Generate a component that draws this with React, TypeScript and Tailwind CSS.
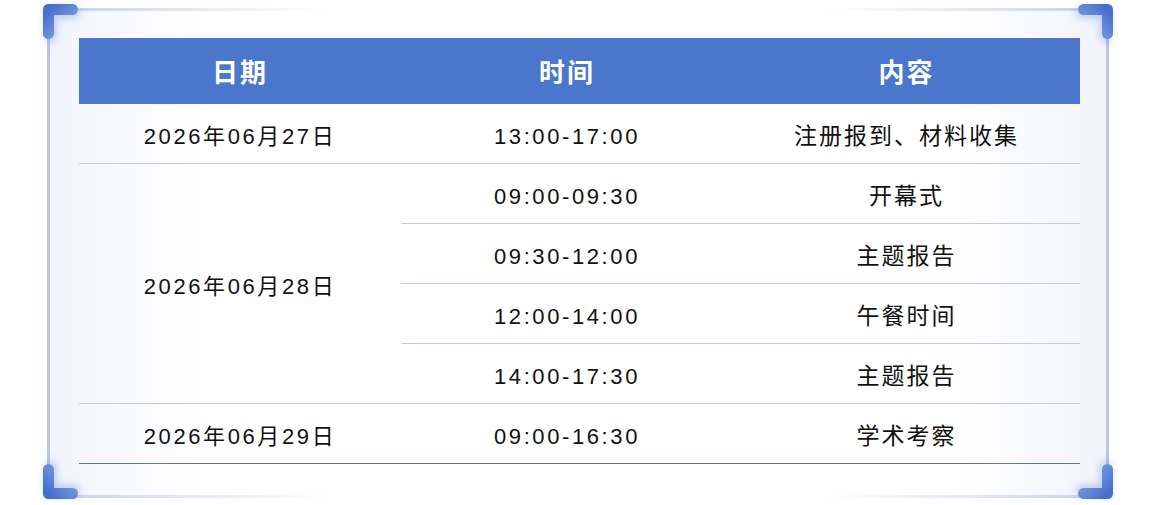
import React from "react";

const schedule = [
  { date: "2026年06月27日", items: [["13:00-17:00", "注册报到、材料收集"]] },
  {
    date: "2026年06月28日",
    items: [
      ["09:00-09:30", "开幕式"],
      ["09:30-12:00", "主题报告"],
      ["12:00-14:00", "午餐时间"],
      ["14:00-17:30", "主题报告"],
    ],
  },
  { date: "2026年06月29日", items: [["09:00-16:30", "学术考察"]] },
];

const Corner = ({ className }: { className: string }) => (
  <svg
    width="35"
    height="35"
    viewBox="0 0 35 35"
    className={`absolute drop-shadow-[2px_3px_4px_rgba(74,118,204,0.35)] ${className}`}
  >
    <defs>
      <linearGradient id="cg" x1="0" y1="0" x2="1" y2="1">
        <stop offset="0" stopColor="#4470cc" />
        <stop offset="1" stopColor="#8aa6e4" />
      </linearGradient>
    </defs>
    <path
      d="M29.5 5.5 L5.5 5.5 L5.5 29.5"
      fill="none"
      stroke="url(#cg)"
      strokeWidth="11"
      strokeLinecap="round"
      strokeLinejoin="round"
    />
  </svg>
);

const App = () => {
  return (
    <div className="w-[1150px] h-[505px] bg-white pt-[8px] pl-[47px] font-['Liberation_Sans','Noto_Sans_CJK_SC',sans-serif]">
      <div className="relative w-[1062px] h-[487px] border-x-[3px] border-[#b5c5ec] bg-[linear-gradient(to_right,#f2f4fc,#ffffff_14%,#ffffff_86%,#f2f4fc)] pt-[30px] pl-[29px] pr-[26px]">
        <div className="absolute -left-[3px] -right-[3px] top-0 h-[3px] bg-[linear-gradient(to_right,#c3d1f0,rgba(255,255,255,0)_27%,rgba(255,255,255,0)_73%,#c3d1f0)]" />
        <div className="absolute -left-[3px] -right-[3px] bottom-[-3px] h-[3px] bg-[linear-gradient(to_right,#c3d1f0,rgba(255,255,255,0)_27%,rgba(255,255,255,0)_73%,#c3d1f0)]" />
        <Corner className="-left-[7px] -top-[4px]" />
        <Corner className="-right-[7px] -top-[4px] -scale-x-100" />
        <Corner className="-left-[7px] -bottom-[4px] -scale-y-100" />
        <Corner className="-right-[7px] -bottom-[4px] -scale-100" />

        <div className="w-[1001px]">
          <div className="flex h-[66px] bg-[#4a76cc] text-white text-[26px] font-bold tracking-[2px]">
            <div className="w-[322px] flex items-center justify-center pt-[5px]">日期</div>
            <div className="w-[332px] flex items-center justify-center pt-[5px]">时间</div>
            <div className="flex-1 flex items-center justify-center pt-[5px]">内容</div>
          </div>
          {schedule.map((g, gi) => (
            <div
              key={g.date}
              className={`flex border-b ${
                gi === schedule.length - 1 ? "border-[#5b72b0]" : "border-[#c3cbe3]"
              }`}
            >
              <div className="w-[322px] flex items-center justify-center text-[22px] tracking-[2.6px] text-[#111] pt-[5px]">
                {g.date}
              </div>
              <div className="flex-1 flex flex-col">
                {g.items.map(([time, content], i) => (
                  <div
                    key={time}
                    className={`flex h-[59px] text-[#111] ${
                      i < g.items.length - 1 ? "h-[60px] border-b border-[#c3cbe3]" : ""
                    }`}
                  >
                    <div className="w-[332px] flex items-center justify-center pt-[5px] text-[22px] tracking-[2.6px]">
                      {time}
                    </div>
                    <div className="flex-1 flex items-center justify-center pt-[5px] text-[23px] tracking-[2px]">
                      {content}
                    </div>
                  </div>
                ))}
              </div>
            </div>
          ))}
        </div>
      </div>
    </div>
  );
};

export default App;
